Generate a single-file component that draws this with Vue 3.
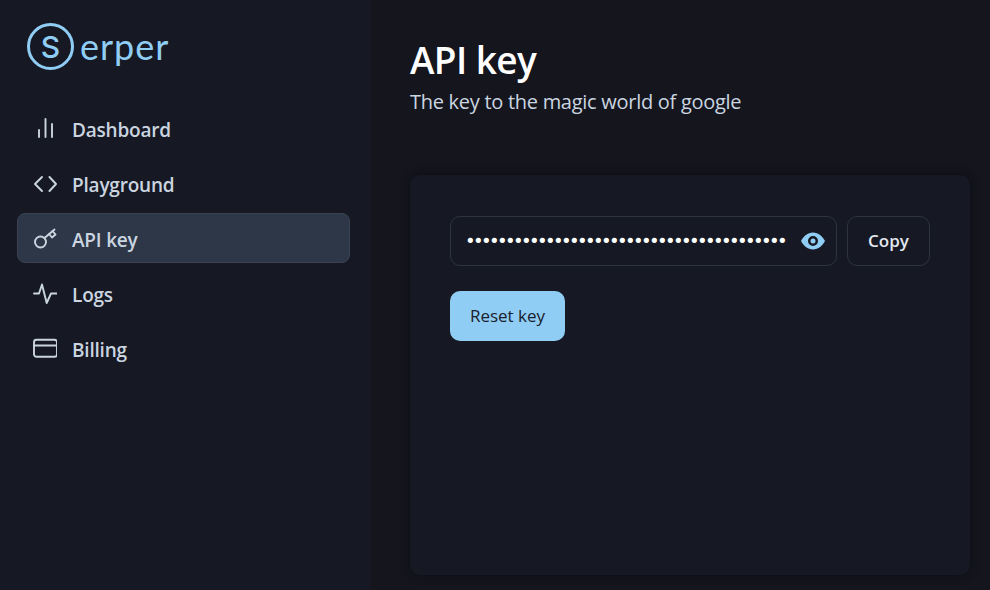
<script setup>
const navItems = [
  { label: "Dashboard", icon: "bars" },
  { label: "Playground", icon: "code" },
  { label: "API key", icon: "key", active: true },
  { label: "Logs", icon: "pulse" },
  { label: "Billing", icon: "card" },
];
const maskedKey = "•".repeat(40);
</script>

<template>
  <div class="layout">
    <aside class="sidebar">
      <div class="logo">
        <span class="logo-circle">S</span>
        <span class="logo-text">erper</span>
      </div>
      <nav class="nav">
        <a v-for="item in navItems" :key="item.label" class="nav-item" :class="{ active: item.active }">
          <svg class="nav-icon" viewBox="0 0 24 24" fill="none" stroke="currentColor" stroke-width="2" stroke-linecap="round" stroke-linejoin="round">
            <template v-if="item.icon === 'bars'">
              <path d="M6 12v7" />
              <path d="M12.500 1v18" />
              <path d="M19 6v13" />
            </template>
            <template v-else-if="item.icon === 'code'">
              <path d="M9 4l-7 7 7 7" />
              <path d="M16.500 4l6.500 7-6.500 7" />
            </template>
            <template v-else-if="item.icon === 'key'">
              <circle cx="7.500" cy="14" r="5.500" />
              <path d="M11.500 10 21.500 1.500" />
              <path d="M16 6l3 3.500 3.500-3-3-3.500" />
            </template>
            <template v-else-if="item.icon === 'pulse'">
              <path d="M1 10.500h5l3-9 4.700 18.500 4.300-9.500h6" />
            </template>
            <template v-else>
              <rect x="1" y="1.800" width="23" height="17" rx="2.500" />
              <path d="M1 7.500h23" />
            </template>
          </svg>
          <span>{{ item.label }}</span>
        </a>
      </nav>
    </aside>
    <main class="main">
      <h1 class="title">API key</h1>
      <p class="subtitle">The key to the magic world of google</p>
      <section class="card">
        <div class="key-row">
          <div class="key-input">
            <span class="key-dots">{{ maskedKey }}</span>
            <svg class="eye" viewBox="0 0 24 24" fill="currentColor">
              <path d="M12 3.500C6.500 3.500 2.500 7.500 0 12c2.500 4.500 6.500 8.500 12 8.500s9.500-4 12-8.500c-2.500-4.500-6.500-8.500-12-8.500Zm0 13.500a5 5 0 1 1 0-10 5 5 0 0 1 0 10Zm0-2.500a2.500 2.500 0 1 0 0-5 2.500 2.500 0 0 0 0 5Z" fill-rule="evenodd" />
            </svg>
          </div>
          <button class="copy-btn">Copy</button>
        </div>
        <button class="reset-btn">Reset key</button>
      </section>
    </main>
  </div>
</template>

<style>
body {
  background: #14151d;
}
</style>

<style scoped>
.layout {
  display: flex;
  width: 990px;
  height: 590px;
  overflow: hidden;
  font-family: "Open Sans", "Noto Sans", sans-serif;
  background: #14151d;
}
.sidebar {
  width: 370px;
  flex-shrink: 0;
  background: #161923;
  padding: 23px 20px 0 17px;
  box-sizing: border-box;
}
.logo {
  display: flex;
  align-items: center;
  height: 47px;
  margin-left: 10px;
  color: #90cdf4;
}
.logo-circle {
  width: 47px;
  height: 47px;
  box-sizing: border-box;
  border: 3px solid #90cdf4;
  border-radius: 50%;
  display: flex;
  align-items: center;
  justify-content: center;
  font-family: Inter, sans-serif;
  font-size: 30px;
  font-weight: 500;
}
.logo-text {
  font-family: Lato, sans-serif;
  font-size: 36px;
  font-weight: 400;
  letter-spacing: 1px;
  margin-left: 6px;
  line-height: 47px;
}
.nav {
  display: flex;
  flex-direction: column;
  gap: 5px;
  margin-top: 33px;
}
.nav-item {
  display: flex;
  align-items: center;
  gap: 15px;
  height: 50px;
  padding-left: 15px;
  padding-top: 4px;
  box-sizing: border-box;
  border: 1px solid transparent;
  border-radius: 8px;
  color: #cbd5e0;
  font-size: 19px;
  font-weight: 600;
  letter-spacing: -0.2px;
}
.nav-item.active {
  background: #2d3748;
  border-color: #394251;
}
.nav-icon {
  width: 24px;
  height: 24px;
  flex-shrink: 0;
  stroke-width: 1.9;
}
.main {
  flex: 1;
  padding: 0 20px 0 40px;
  min-width: 0;
}
.title {
  margin: 36px 0 0;
  font-size: 37px;
  line-height: 48px;
  font-weight: 600;
  color: #fff;
  letter-spacing: -0.6px;
}
.subtitle {
  margin: 4px 0 0;
  font-size: 20px;
  line-height: 28px;
  color: #cbd5e0;
  letter-spacing: -0.28px;
}
.card {
  margin-top: 59px;
  height: 400px;
  box-sizing: border-box;
  padding: 41px 40px;
  background: #161923;
  border-radius: 10px;
  box-shadow: 0 0 8px rgba(10, 12, 18, 0.7);
}
.key-row {
  display: flex;
  gap: 10px;
}
.key-input {
  width: 387px;
  height: 50px;
  box-sizing: border-box;
  display: flex;
  align-items: center;
  justify-content: space-between;
  padding: 0 11px 0 14px;
  border: 1px solid #2d3340;
  border-radius: 10px;
}
.key-dots {
  white-space: nowrap;
  color: #fff;
  font-family: "DejaVu Sans", sans-serif;
  font-size: 18px;
  line-height: 24px;
  letter-spacing: -2.62px;
}
.eye {
  width: 24px;
  height: 24px;
  color: #90cdf4;
}
.copy-btn {
  width: 83px;
  height: 50px;
  padding-bottom: 2px;
  background: transparent;
  border: 1px solid #2d3340;
  border-radius: 10px;
  color: #e2e8f0;
  font-family: inherit;
  font-size: 17px;
  font-weight: 600;
}
.reset-btn {
  display: block;
  width: 115px;
  height: 50px;
  margin-top: 25px;
  padding-bottom: 2px;
  background: #90cdf4;
  border: none;
  border-radius: 10px;
  color: #1a202c;
  font-family: inherit;
  font-size: 17px;
  font-weight: 400;
}
</style>
